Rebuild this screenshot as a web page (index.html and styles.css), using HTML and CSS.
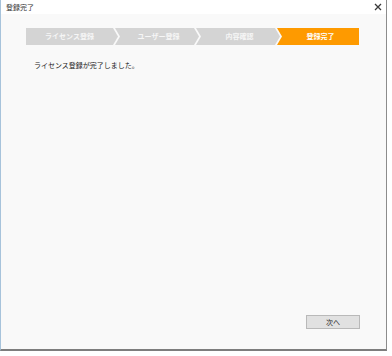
FILE: index.html
```html
<!DOCTYPE html>
<html lang="ja">
<head>
<meta charset="utf-8">
<link rel="stylesheet" href="styles.css">
</head>
<body>
<div class="window">
  <div class="titlebar">
    <span class="title">登録完了</span>
    <svg class="close" width="8" height="8" viewBox="0 0 8 8"><path d="M1 1 L7 7 M7 1 L1 7" stroke="#3a3a3a" stroke-width="1.3" fill="none"/></svg>
  </div>
  <div class="content">
    <div class="steps">
      <div class="step first">ライセンス登録</div>
      <div class="step mid">ユーザー登録</div>
      <div class="step mid">内容確認</div>
      <div class="step last active">登録完了</div>
    </div>
    <p class="message">ライセンス登録が完了しました。</p>
    <div class="spacer"></div>
    <div class="footer">
      <button class="btn">次へ</button>
    </div>
  </div>
</div>
</body>
</html>
```
FILE: styles.css
```css
* { box-sizing: border-box; }
html, body { margin: 0; padding: 0; background: #ffffff; }
body {
  font-family: "Noto Sans CJK JP", "Noto Sans", sans-serif;
  width: 392px; height: 356px; overflow: hidden;
}
.window {
  width: 387px; height: 351px;
  border-left: 1px solid #a7c3db;
  border-right: 1px solid #8c8c8c;
  border-bottom: 2px solid #7d7d7d;
  display: flex; flex-direction: column;
  background: #f9f9f9;
}
.titlebar {
  height: 14px; background: #ffffff;
  display: flex; align-items: center; justify-content: space-between;
  padding: 0 4px 0 5px;
}
.title { font-size: 7px; color: #333; line-height: 1; }
.close { display: block; margin-top: -1px; }
.content { flex: 1; display: flex; flex-direction: column; padding: 14px 26px 20px 25px; }
.steps { display: flex; height: 17px; }
.step {
  height: 17px; color: #f6f6f6; font-size: 7px; font-weight: bold;
  display: flex; align-items: center; justify-content: center;
  background: #d4d4d4; line-height: 1;
}
.step.first { width: 92px; padding-right: 5px; clip-path: polygon(0 0, 87px 0, 92px 50%, 87px 100%, 0 100%); }
.step.mid { width: 84px; margin-left: -3px; padding-left: 3px; clip-path: polygon(0 0, 79px 0, 84px 50%, 79px 100%, 0 100%, 5px 50%); }
.step.last { width: 82px; margin-left: -3px; padding-left: 5px; clip-path: polygon(0 0, 82px 0, 82px 100%, 0 100%, 5px 50%); }
.step.active { background: #fe9a00; color: #fff; }
.message { margin: 15px 0 0 8px; font-size: 7px; color: #222; line-height: 10px; }
.spacer { flex: 1; }
.footer { display: flex; justify-content: flex-end; }
.btn {
  width: 54px; height: 14px; margin: 0; padding: 0;
  background: #e1e1e1; border: 1px solid #b9b9b9;
  font-family: inherit; font-size: 7px; color: #222; line-height: 1;
}
```
